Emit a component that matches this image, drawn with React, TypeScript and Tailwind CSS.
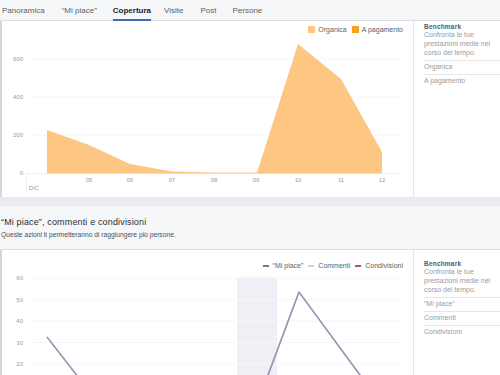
const tabs = [
  { label: "Panoramica", ml: "ml-[2px]" },
  { label: "\u201cMi piace\u201d", ml: "ml-[17px]" },
  { label: "Copertura", ml: "ml-[16px]", active: true },
  { label: "Visite", ml: "ml-[13px]" },
  { label: "Post", ml: "ml-[17px]" },
  { label: "Persone", ml: "ml-[16px]" },
];

const days = [
  { x: 89, t: "05" },
  { x: 130, t: "06" },
  { x: 172, t: "07" },
  { x: 214, t: "08" },
  { x: 256, t: "09" },
  { x: 298, t: "10" },
  { x: 341, t: "11" },
  { x: 382, t: "12" },
];

function Benchmark({ rows, top }: { rows: string[]; top: string }) {
  return (
    <aside className={`w-[87px] shrink-0 border-l border-[#e5e6e9] pl-[10px] ${top}`}>
      <div className="text-[6.5px] font-bold leading-[6px] tracking-[0.2px] text-[#55585e]">Benchmark</div>
      <p className="text-[7px] leading-[9px] text-[#9a9ca1]">
        Confronta le tue
        <br />
        prestazioni medie nel
        <br />
        corso del tempo.
      </p>
      <div className="mt-[3px]">
        {rows.map((r) => (
          <div key={r} className="flex h-[14px] items-center border-t border-[#e5e6e9] text-[7px] text-[#9a9ca1]">
            {r}
          </div>
        ))}
      </div>
    </aside>
  );
}

function ReachChart() {
  return (
    <svg width={411} height={164} viewBox="2 33 411 164" className="block">
      {[59, 97, 135].map((y) => (
        <line key={y} x1={28} x2={400} y1={y} y2={y} stroke="#f6f6f7" strokeWidth={1} />
      ))}
      <line x1={26} x2={400} y1={173.5} y2={173.5} stroke="#efeff1" strokeWidth={1} />
      <line x1={26.5} x2={26.5} y1={173} y2={190} stroke="#efeff1" strokeWidth={1} />
      <path
        d="M47,173.5 L47,130 L89,145 L130,164 L172,171.5 L213,172.5 L257,172.5 L298,44 L341,79 L382,152 L382,173.5 Z"
        fill="#fdc683"
      />
      {[
        { y: 61, t: "600" },
        { y: 99, t: "400" },
        { y: 137, t: "200" },
        { y: 175, t: "0" },
      ].map((l) => (
        <text key={l.t} x={23} y={l.y} textAnchor="end" fontSize={6} fill="#9a9ca1" fontFamily="Liberation Sans, Arial, sans-serif">
          {l.t}
        </text>
      ))}
      {days.map((d) => (
        <text key={d.t} x={d.x} y={182} textAnchor="middle" fontSize={6} fill="#9a9ca1" fontFamily="Liberation Sans, Arial, sans-serif">
          {d.t}
        </text>
      ))}
      <text x={34} y={189.5} textAnchor="middle" fontSize={6} fill="#9a9ca1" fontFamily="Liberation Sans, Arial, sans-serif">
        DIC
      </text>
    </svg>
  );
}

function EngagementChart() {
  return (
    <svg width={411} height={140} viewBox="2 270 411 140" className="block">
      <rect x={237} y={277} width={40} height={140} fill="#eef0f6" />
      {[278, 299.5, 321, 342.5, 364].map((y) => (
        <line key={y} x1={28} x2={400} y1={y} y2={y} stroke="#f6f6f7" strokeWidth={1} />
      ))}
      {[
        { y: 280, t: "60" },
        { y: 301.5, t: "50" },
        { y: 323, t: "40" },
        { y: 344.5, t: "30" },
        { y: 366, t: "20" },
      ].map((l) => (
        <text key={l.t} x={23} y={l.y} textAnchor="end" fontSize={6} fill="#9a9ca1" fontFamily="Liberation Sans, Arial, sans-serif">
          {l.t}
        </text>
      ))}
      <polyline
        points="47,337 89,391 130,420 255,410 299,292 382,405"
        fill="none"
        stroke="#b7a6c2"
        strokeWidth={1.8}
        strokeLinejoin="round"
      />
      <polyline
        points="47,337 89,391 130,420 255,410 299,292 382,405"
        fill="none"
        stroke="#9487ad"
        strokeWidth={0.9}
        strokeLinejoin="round"
      />
    </svg>
  );
}

export default function App() {
  return (
    <div className="h-[375px] w-[500px] overflow-hidden bg-[#e9ebee] font-['Liberation_Sans',Arial,sans-serif]">
      <nav className="flex h-[21px] items-stretch bg-[#f6f7f9] shadow-[inset_0_-1px_0_#dddfe2]">
        {tabs.map((t) => (
          <div
            key={t.label}
            className={`flex items-center text-[8px] ${t.ml} ${
              t.active ? "border-b-2 border-[#4267b2] pt-[2px] font-bold text-[#1d2129]" : "text-[#5d6067]"
            }`}
          >
            {t.label}
          </div>
        ))}
      </nav>

      <section className="flex h-[176px] border-l-2 border-[#d3d6db] bg-white">
        <div className="w-[411px] shrink-0">
          <div className="flex h-[12px] items-end justify-end gap-[5px] pr-[10px] text-[7px] leading-[7px] text-[#5d6067]">
            <span className="flex items-center gap-[3px]">
              <span className="h-[7px] w-[7px] bg-[#fdc683]" />
              Organica
            </span>
            <span className="flex items-center gap-[3px]">
              <span className="h-[7px] w-[7px] bg-[#f5a01e]" />
              A pagamento
            </span>
          </div>
          <ReachChart />
        </div>
        <Benchmark top="pt-[3px]" rows={["Organica", "A pagamento"]} />
      </section>

      <div className="h-[9px] bg-[#e9ebee]" />

      <header className="h-[44px] border-b border-[#dddfe2] bg-[#f6f7f9] pl-[1px] pt-[11px]">
        <h2 className="text-[9px] leading-[11px] tracking-[0.15px] text-[#2a2d33]">
          {"\u201cMi piace\u201d, commenti e condivisioni"}
        </h2>
        <p className="mt-[2px] text-[6.7px] leading-[9px] text-[#4b4f56]">
          Queste azioni ti permetteranno di raggiungere più persone.
        </p>
      </header>

      <section className="flex h-[160px] border-l-2 border-[#d3d6db] bg-white">
        <div className="w-[411px] shrink-0">
          <div className="flex h-[20px] items-end justify-end gap-[5px] pr-[10px] text-[7px] leading-[8px] text-[#5d6067]">
            <span className="flex items-center gap-[4px]">
              <span className="h-[1.5px] w-[6px] bg-[#6d7a96]" />
              {"\u201cMi piace\u201d"}
            </span>
            <span className="flex items-center gap-[4px]">
              <span className="h-[1.5px] w-[6px] bg-[#cfd1d9]" />
              Commenti
            </span>
            <span className="flex items-center gap-[4px]">
              <span className="h-[1.5px] w-[6px] bg-[#a8556f]" />
              Condivisioni
            </span>
          </div>
          <EngagementChart />
        </div>
        <Benchmark top="pt-[11px]" rows={["\u201cMi piace\u201d", "Commenti", "Condivisioni"]} />
      </section>
    </div>
  );
}
